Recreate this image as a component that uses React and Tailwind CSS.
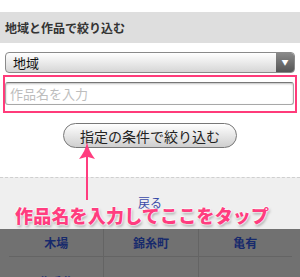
import React from 'react';

const stations = [
  ['木場', '錦糸町', '亀有'],
  ['北千住', '', ''],
];

// Pink annotation arrow pointing up at the search button
const Arrow = () => (
  <svg width="18" height="60" viewBox="0 0 18 60" className="absolute left-[78px] top-[141px]">
    <path d="M9 1 C10 7 13 13 17 18 L10 16 L10 59 L8 59 L8 16 L1 18 C5 13 8 7 9 1 Z" fill="#ff3d7f" />
  </svg>
);

export default function App() {
  return (
    <div className="relative w-[300px] h-[277px] overflow-hidden bg-white font-['Noto_Sans_CJK_JP','Noto_Sans',sans-serif]">
      <div className="h-3" />
      <div className="h-[31px] bg-[#dedede] flex items-center px-[5px] text-[12px] font-bold text-[#333]">
        地域と作品で絞り込む
      </div>

      <div className="px-[5px] pt-[9px]">
        <div className="h-[21px] flex rounded-[4px] border border-[#8a8a8a] overflow-hidden bg-gradient-to-b from-white to-[#d6d6d6]">
          <span className="flex-1 flex items-center pl-[7px] text-[13px] text-[#111]">地域</span>
          <span className="w-[18px] flex items-center justify-center bg-gradient-to-b from-[#8a8a8a] to-[#555] text-white text-[7px]">▼</span>
        </div>
      </div>

      <div className="mx-[3px] mt-[2px] h-[38px] border-2 border-[#ff3b7a] pt-[5px] pl-0 pr-px">
        <div className="h-[23px] rounded-[3px] border border-[#a8a8a8] border-t-[#777] shadow-[inset_0_1px_2px_rgba(0,0,0,0.25)] flex items-center pl-[4px] text-[13px] text-[#bdbdbd]">
          作品名を入力
        </div>
      </div>

      <div className="flex justify-center pt-[10px]">
        <button className="w-[174px] h-[25px] rounded-full border border-[#777] bg-gradient-to-b from-white to-[#cfcfcf] text-[14px] text-[#222] leading-none">
          指定の条件で絞り込む
        </button>
      </div>

      <div className="mt-[29px] h-[52px] border-t border-dashed border-[#cfcfcf] bg-[#efefef] flex justify-center pt-[19px]">
        <span className="text-[12px] leading-none text-[#3a4aa8]">戻る</span>
      </div>

      <div className="bg-[#717171] pl-[9px] pr-[8px]">
        {stations.map((row, i) => (
          <div key={i} className="grid grid-cols-3 h-[28px] border-b border-[#646464]">
            {row.map((name, j) => (
              <div
                key={j}
                className={`flex items-center justify-center text-[12px] font-bold text-[#172a6c] ${j > 0 ? 'border-l border-[#646464]' : ''} ${i === 1 ? 'pt-[16px]' : ''}`}
              >
                {name}
              </div>
            ))}
          </div>
        ))}
      </div>

      <Arrow />

      <div className="absolute left-[15px] top-[206px] text-[18px] font-extrabold tracking-[0.2px] text-[#ff3d7f] leading-none whitespace-nowrap [text-shadow:0_0_2px_#fff,0_0_2px_#fff,0_0_2px_#fff,1px_2px_3px_rgba(0,0,0,0.35)]">
        作品名を入力してここをタップ
      </div>
    </div>
  );
}
